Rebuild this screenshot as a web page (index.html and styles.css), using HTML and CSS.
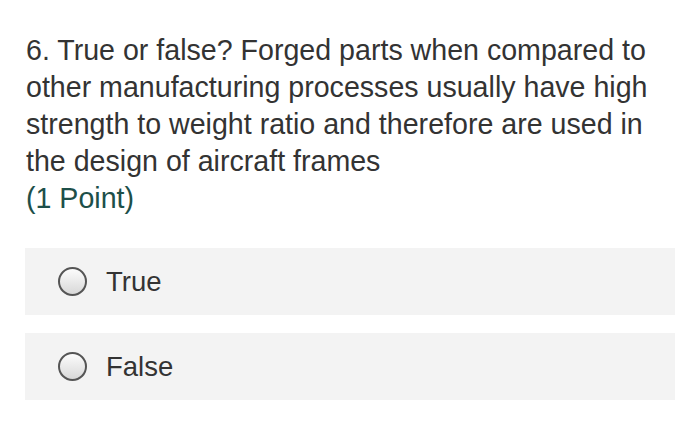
FILE: index.html
```html
<!DOCTYPE html>
<html>
<head>
<meta charset="utf-8">
<link rel="stylesheet" href="styles.css">
</head>
<body>
<div class="question">
  <div class="title">6. True or false? Forged parts when compared to other manufacturing processes usually have high strength to weight ratio and therefore are used in the design of aircraft frames</div>
  <div class="points">(1 Point)</div>
  <div class="options">
    <label class="option"><span class="radio"></span><span class="label">True</span></label>
    <label class="option"><span class="radio"></span><span class="label">False</span></label>
  </div>
</div>
</body>
</html>
```
FILE: styles.css
```css
html, body {
  margin: 0;
  padding: 0;
  background: #fff;
}
body {
  font-family: "Liberation Sans", Arial, sans-serif;
  color: #333;
}
.question {
  padding: 32px 25px 0 25px;
  width: 650px;
}
.title {
  font-size: 28.6px;
  line-height: 37px;
  padding-left: 1px;
}
.points {
  font-size: 28.6px;
  line-height: 37px;
  color: #1d4f49;
  padding-left: 1px;
}
.options {
  margin-top: 31px;
  display: flex;
  flex-direction: column;
  gap: 18px;
}
.option {
  display: flex;
  align-items: center;
  height: 67px;
  background: #f3f3f3;
  padding-left: 33px;
}
.radio {
  width: 25px;
  height: 25px;
  border: 2px solid #555;
  border-radius: 50%;
  background: linear-gradient(#fcfcfc, #d8d8d8);
  flex: none;
}
.label {
  margin-left: 19px;
  font-size: 27.5px;
  color: #333;
}
```
